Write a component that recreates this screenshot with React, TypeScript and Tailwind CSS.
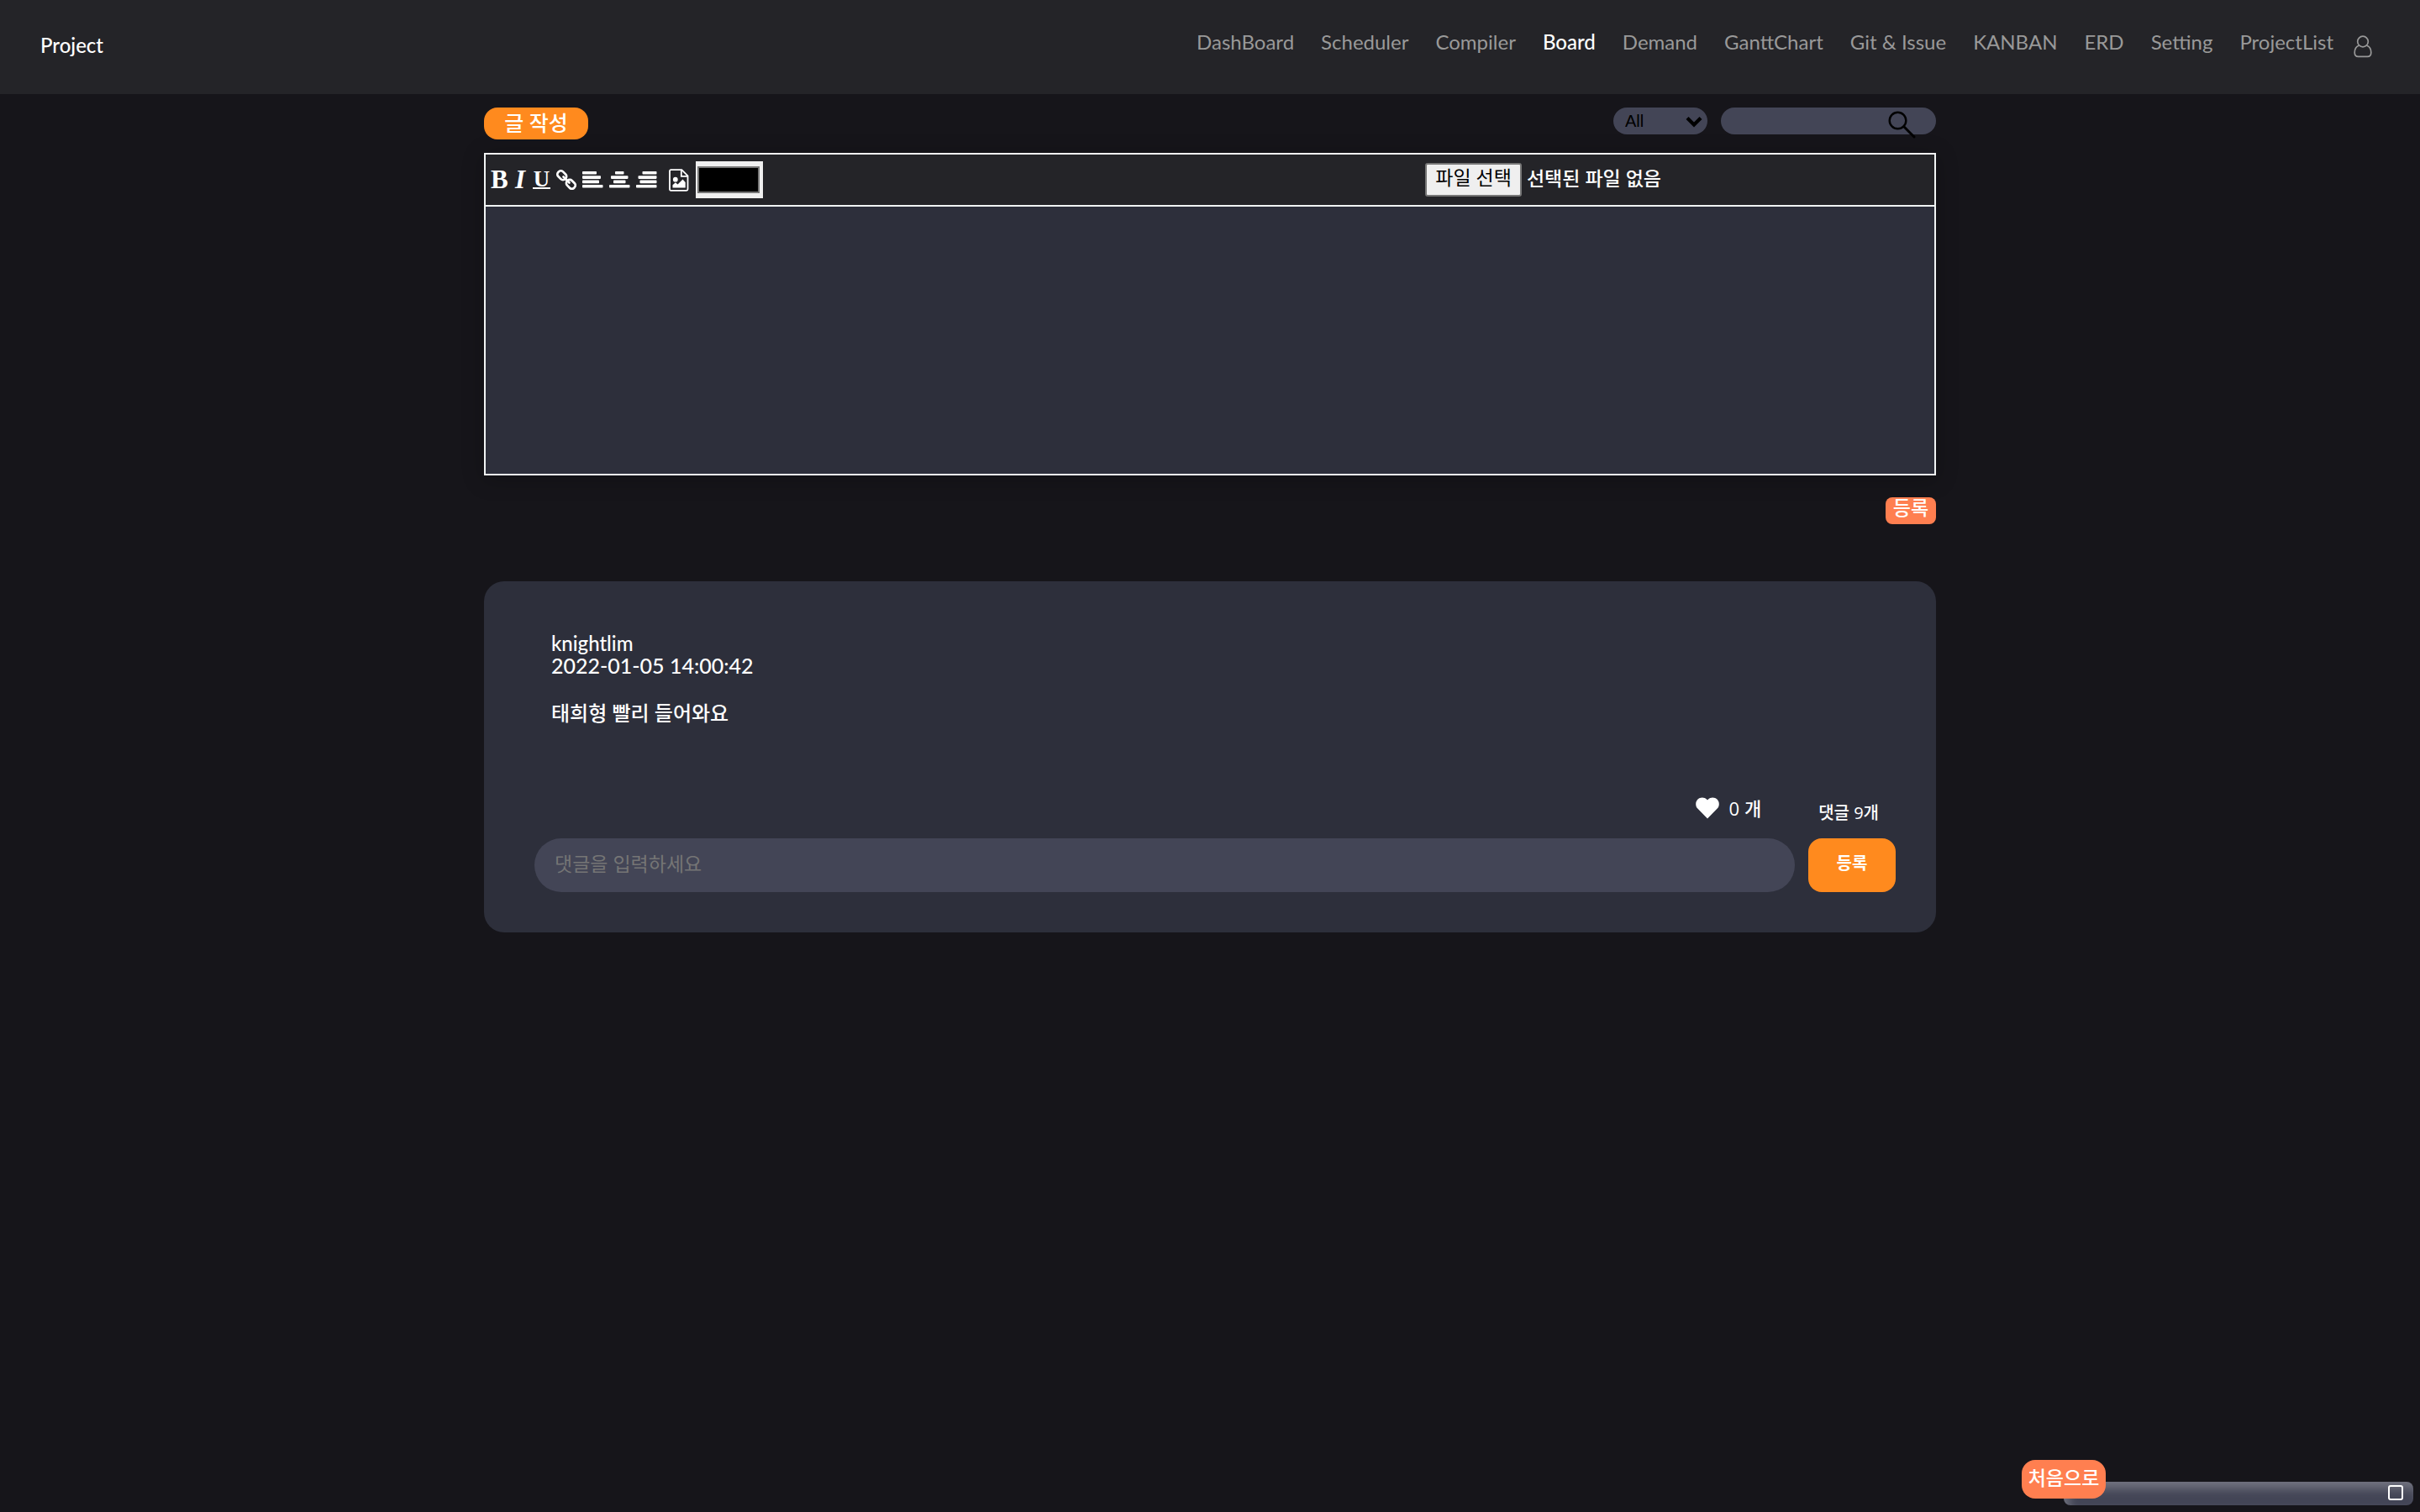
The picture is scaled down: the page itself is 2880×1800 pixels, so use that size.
import React from 'react';

const NAV = [
  'DashBoard',
  'Scheduler',
  'Compiler',
  'Board',
  'Demand',
  'GanttChart',
  'Git & Issue',
  'KANBAN',
  'ERD',
  'Setting',
  'ProjectList',
];

function PersonIcon() {
  return (
    <svg width="22" height="27" viewBox="0 0 22 27" fill="none" stroke="currentColor" strokeWidth="1.7">
      <circle cx="11" cy="7.5" r="6.3" />
      <path d="M6.3 12.2C3 13.4 1.2 16.8 1.2 20.5c0 3.4 1 4.9 4.3 4.9h11c3.3 0 4.3-1.5 4.3-4.9 0-3.7-1.8-7.1-5.1-8.300" />
    </svg>
  );
}

function LinkIcon() {
  return (
    <svg width="24" height="24" viewBox="0 0 24 24" fill="none" stroke="currentColor" strokeWidth="2.7">
      <rect x="1" y="2.7" width="11.5" height="8" rx="3.6" transform="rotate(45 6.7 6.7)" />
      <rect x="11.6" y="13.3" width="11.5" height="8" rx="3.6" transform="rotate(45 17.3 17.3)" />
      <path d="M8.5 8.5l7 7" strokeLinecap="round" />
    </svg>
  );
}

function AlignIcon({ bars }: { bars: [number, number][] }) {
  return (
    <svg width="25" height="20" viewBox="0 0 25 20" fill="currentColor">
      {bars.map(([x, w], i) => (
        <rect key={i} x={x} y={i * 5.3} width={w} height="3.6" rx="0.8" />
      ))}
    </svg>
  );
}

function FileImageIcon() {
  return (
    <svg width="24" height="27" viewBox="0 0 24 27" fill="none" stroke="currentColor" strokeWidth="1.8">
      <path d="M2.5 1.2h12.8l7.2 7.2v15.9q0 1.5-1.5 1.5h-18.5q-1.5 0-1.5-1.5v-21.600q0-1.5 1.5-1.5z" />
      <path d="M14.8 1.5v7.3h7.5" />
      <circle cx="7.8" cy="12.7" r="2.9" fill="currentColor" stroke="none" />
      <path d="M4.5 22.6v-3.4l3.4-3 2.6 2.4 6-6.2 3.2 3.6v6.6z" fill="currentColor" stroke="none" />
    </svg>
  );
}

function HeartIcon() {
  return (
    <svg width="28" height="26" viewBox="0 0 28 26" fill="currentColor">
      <path d="M14 25.5L2.3 13.6C-.6 10.5-.4 5.5 2.3 2.8c3-3 8-3 11 0l.7.7.7-.7c3-3 8-3 11 0 2.7 2.7 2.9 7.7 0 10.8z" />
    </svg>
  );
}

function SearchIcon() {
  return (
    <svg width="33" height="33" viewBox="0 0 33 33" fill="none" stroke="#000" strokeLinecap="round">
      <circle cx="11.5" cy="11.5" r="9.8" strokeWidth="2.4" />
      <path d="M18.8 18.8L31 31" strokeWidth="3" />
    </svg>
  );
}

function Header() {
  return (
    <header className="flex h-28 items-start justify-between bg-[#242428] pt-9 pr-[57px] pl-12 font-['Lato',sans-serif] text-2xl leading-7">
      <a href="#" className="mt-1 font-medium text-white">
        Project
      </a>
      <nav className="flex items-start gap-8 text-[#999999]">
        {NAV.map((n) => (
          <a key={n} href="#" className={n === 'Board' ? 'font-medium text-white' : ''}>
            {n}
          </a>
        ))}
        <button type="button" aria-label="Profile" className="mt-1.5 -ml-2">
          <PersonIcon />
        </button>
      </nav>
    </header>
  );
}

function Editor() {
  return (
    <section className="mt-4 border-2 border-[#f1f4f4] bg-[#2d2f3b] shadow-[0_4px_24px_rgba(0,0,0,0.25)]">
      <div className="flex h-[62px] items-center border-b-2 border-[#f1f4f4] bg-[#242428] pl-1.5 text-white">
        <div className="flex items-center gap-[7px] font-['Liberation_Serif',serif] font-bold">
          <button type="button" className="w-5 text-[31px] leading-8">
            B
          </button>
          <button type="button" className="w-4 text-[31px] leading-8 italic">
            I
          </button>
          <button type="button" className="flex w-[21px] justify-center border-b-2 border-white text-[27px] leading-5">
            U
          </button>
          <button type="button" aria-label="Link">
            <LinkIcon />
          </button>
          <button type="button" aria-label="Align left">
            <AlignIcon bars={[[0, 17], [0, 22], [0, 20], [0, 24.5]]} />
          </button>
          <button type="button" aria-label="Align center">
            <AlignIcon bars={[[7, 10.5], [2, 20.5], [5, 14.5], [0, 24.5]]} />
          </button>
          <button type="button" aria-label="Align right">
            <AlignIcon bars={[[7.5, 17], [2.5, 22], [4.5, 20], [0, 24.5]]} />
          </button>
        </div>
        <button type="button" aria-label="Image" className="ml-3.5">
          <FileImageIcon />
        </button>
        <input
          type="color"
          aria-label="Text color"
          defaultValue="#000000"
          className="ml-2 h-11 w-20 appearance-none bg-[#efefef] py-1.5 pr-1 pl-0.5 [&::-webkit-color-swatch]:rounded-none [&::-webkit-color-swatch]:border-2 [&::-webkit-color-swatch]:border-[#767676] [&::-webkit-color-swatch-wrapper]:p-0"
        />
        <div className="mr-[325px] ml-auto flex items-center gap-1.5 text-[23px] leading-7">
          <input id="file" type="file" className="sr-only" />
          <label
            htmlFor="file"
            className="flex h-10 items-center rounded-[3px] border-2 border-[#767676] bg-[#efefef] px-2.5 pb-1.5 text-black"
          >
            파일 선택
          </label>
          <span className="pb-1 font-medium">선택된 파일 없음</span>
        </div>
      </div>
      <textarea aria-label="Post" className="block h-[318px] w-full resize-none bg-transparent p-4 text-2xl text-white outline-none" />
    </section>
  );
}

function Post() {
  return (
    <article className="mt-[68px] rounded-3xl bg-[#2d2f3b] pt-[61px] pr-12 pb-12 pl-15 text-white">
      <div className="pl-5 font-medium">
        <div className="font-['Lato',sans-serif] leading-[26px]">
          <p className="text-2xl leading-[26px]">knightlim</p>
          <p className="text-[25px] leading-[26px]">2022-01-05 14:00:42</p>
        </div>
        <p className="mt-[30px] text-2xl leading-7">태희형 빨리 들어와요</p>
      </div>
      <div className="mt-[77px] flex h-11 items-center justify-end pr-5 font-medium">
        <button type="button" aria-label="Like">
          <HeartIcon />
        </button>
        <span className="ml-3 text-[22px] leading-7">0 개</span>
        <span className="ml-[68px] pt-3 text-xl leading-7">댓글 9개</span>
      </div>
      <form className="mt-3.5 flex gap-4">
        <input
          type="text"
          aria-label="댓글"
          placeholder="댓글을 입력하세요"
          className="h-16 min-w-0 flex-1 rounded-full bg-[#434556] px-6 pb-1 text-[23px] text-white placeholder-[#757575] outline-none"
        />
        <button type="button" className="h-16 w-26 rounded-2xl bg-[#ff8a1e] pb-1 text-xl font-bold">
          등록
        </button>
      </form>
    </article>
  );
}

export default function App() {
  return (
    <div lang="ko" className="min-h-screen bg-[#16151a] font-['Open_Sans','Noto_Sans_CJK_KR',sans-serif]">
      <Header />
      <main className="mx-auto w-3/5 pt-4">
        <div className="flex items-start justify-between">
          <button type="button" className="h-[38px] w-31 rounded-2xl bg-[#ff8a1e] pb-0.5 text-[25px] leading-7 font-medium text-white">
            글 작성
          </button>
          <div className="flex gap-4">
            <div className="relative">
              <select
                aria-label="Search type"
                className="h-8 w-28 appearance-none rounded-2xl bg-[#434556] pl-3.5 font-['Liberation_Sans',sans-serif] text-xl leading-8 text-black outline-none"
              >
                <option>All</option>
              </select>
              <svg className="pointer-events-none absolute top-2.5 right-1.5" width="20" height="14" viewBox="0 0 20 14" fill="none" stroke="#000" strokeWidth="4.2">
                <path d="M2 2.5l8 8 8-8" />
              </svg>
            </div>
            <div className="relative">
              <input type="text" aria-label="Search" className="block h-8 w-64 rounded-2xl bg-[#434556] pr-16 pl-4 text-xl outline-none" />
              <button type="button" aria-label="Search" className="absolute top-1 right-6">
                <SearchIcon />
              </button>
            </div>
          </div>
        </div>
        <Editor />
        <div className="mt-[26px] flex justify-end">
          <button type="button" className="flex h-8 w-15 items-start justify-center rounded-lg bg-[#ff7f50] text-[23px] leading-6 font-medium text-white">
            등록
          </button>
        </div>
        <Post />
      </main>
      <div className="fixed right-2 bottom-2 flex h-7 w-104 items-start justify-end rounded-lg bg-[#434556] pt-1 pr-3 shadow-[inset_6px_8px_12px_rgba(255,255,255,0.25)]">
        <button type="button" aria-label="Maximize" className="size-[18px] rounded-[3px] border-2 border-white" />
      </div>
      <button
        type="button"
        className="fixed right-[374px] bottom-4 h-[46px] w-25 rounded-2xl bg-[#ff7f50] pb-1 text-[23px] leading-7 font-medium text-white"
      >
        처음으로
      </button>
    </div>
  );
}
